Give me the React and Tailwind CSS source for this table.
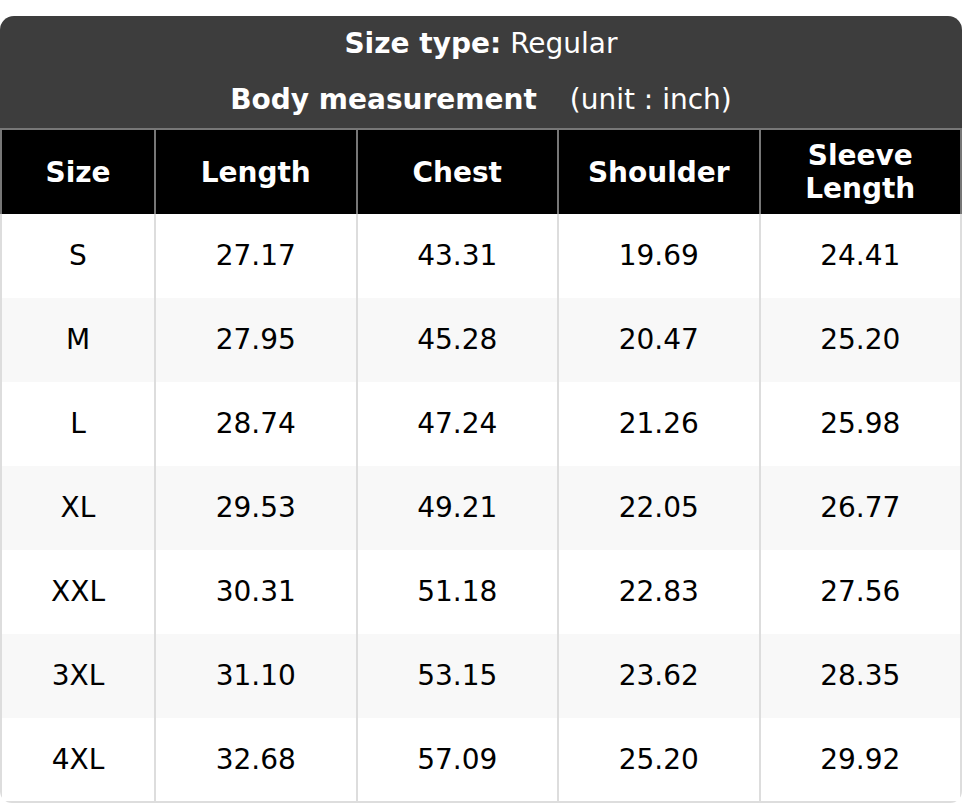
import React from 'react';

const COLUMNS = ['Size', 'Length', 'Chest', 'Shoulder', 'Sleeve Length'];

const ROWS = [
  ['S', '27.17', '43.31', '19.69', '24.41'],
  ['M', '27.95', '45.28', '20.47', '25.20'],
  ['L', '28.74', '47.24', '21.26', '25.98'],
  ['XL', '29.53', '49.21', '22.05', '26.77'],
  ['XXL', '30.31', '51.18', '22.83', '27.56'],
  ['3XL', '31.10', '53.15', '23.62', '28.35'],
  ['4XL', '32.68', '57.09', '25.20', '29.92'],
];

export default function App() {
  return (
    <div className="w-[962px] pt-[16px] bg-white font-['DejaVu_Sans',sans-serif]">
      <div className="rounded-t-[14px] rounded-b-[12px] overflow-hidden">
        {/* Title block */}
        <div className="bg-[#3d3d3d] text-white text-[28px]">
          <div className="h-[56px] flex items-center justify-center">
            <span className="font-bold">Size type:</span>
            <span className="ml-[9px]">Regular</span>
          </div>
          <div className="h-[56px] flex items-center justify-center">
            <span className="font-bold">Body measurement</span>
            <span className="ml-[33px]">(unit : inch)</span>
          </div>
        </div>

        {/* Measurements */}
        <table className="w-full table-fixed border-collapse text-[28px]">
          <colgroup>
            <col className="w-[154px]" />
            <col />
            <col />
            <col />
            <col />
          </colgroup>
          <thead>
            <tr>
              {COLUMNS.map((col) => (
                <th
                  key={col}
                  className="h-[85px] bg-black text-white font-bold leading-[33px] border-t-2 border-x-2 border-[#777777] px-2"
                >
                  {col === 'Sleeve Length' ? (
                    <>
                      Sleeve
                      <br />
                      Length
                    </>
                  ) : (
                    col
                  )}
                </th>
              ))}
            </tr>
          </thead>
          <tbody>
            {ROWS.map((row, i) => (
              <tr key={row[0]} className={i % 2 === 1 ? 'bg-[#f8f8f8]' : 'bg-white'}>
                {row.map((cell, j) => (
                  <td
                    key={j}
                    className={
                      'h-[84px] text-center text-black border-x-2 border-[#dddddd] ' +
                      (i === ROWS.length - 1 ? 'border-b-2' : '')
                    }
                  >
                    {cell}
                  </td>
                ))}
              </tr>
            ))}
          </tbody>
        </table>
      </div>
    </div>
  );
}
